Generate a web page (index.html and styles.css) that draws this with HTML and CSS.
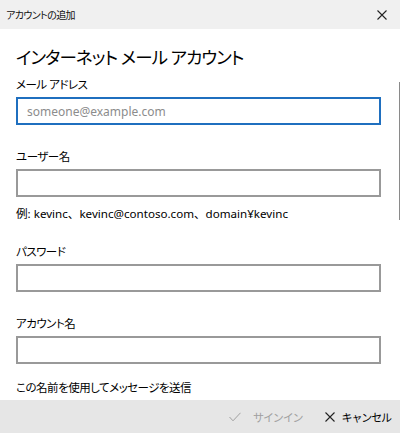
FILE: index.html
```html
<!DOCTYPE html>
<html lang="ja">
<head>
    <meta charset="utf-8">
    <title>アカウントの追加</title>
    <link rel="stylesheet" href="styles.css">
</head>
<body>
    <div class="dialog">
        <div class="titlebar">
            <span class="title">アカウントの追加</span>
            <button class="close" aria-label="閉じる">
                <svg width="10" height="10" viewBox="0 0 10 10"><path d="M0.5 0.5 L9.5 9.5 M9.5 0.5 L0.5 9.5" stroke="#222" stroke-width="1.1" fill="none"/></svg>
            </button>
        </div>

        <div class="content">
            <h1 class="heading">インターネット メール アカウント</h1>

            <label class="label">メール アドレス</label>
            <input class="field focused" type="text" placeholder="someone@example.com">

            <label class="label gap">ユーザー名</label>
            <input class="field" type="text">
            <p class="hint">例: kevinc、kevinc@contoso.com、domain¥kevinc</p>

            <label class="label gap-hint">パスワード</label>
            <input class="field" type="password">

            <label class="label gap">アカウント名</label>
            <input class="field" type="text">

            <label class="label gap-small">この名前を使用してメッセージを送信</label>
            <input class="field" type="text">

            <!-- scroll indicator -->
            <div class="scrollbar"></div>
        </div>

        <div class="footer">
            <button class="action disabled">
                <svg width="12" height="10" viewBox="0 0 12 10"><path d="M0.5 5 L4 8.8 L11.5 0.8" stroke="#a0a0a0" stroke-width="1" fill="none"/></svg>
                <span>サインイン</span>
            </button>
            <button class="action cancel">
                <svg width="10" height="10" viewBox="0 0 10 10"><path d="M0.5 0.5 L9.5 9.5 M9.5 0.5 L0.5 9.5" stroke="#222" stroke-width="1.1" fill="none"/></svg>
                <span>キャンセル</span>
            </button>
        </div>
    </div>
</body>
</html>
```

FILE: styles.css
```css
body {
    margin: 0;
    font-family: "Noto Sans", "Noto Sans CJK JP", sans-serif;
    font-feature-settings: "palt";
    color: #000;
    background: #fff;
}
.dialog {
    width: 400px;
    height: 433px;
    display: flex;
    flex-direction: column;
    overflow: hidden;
}
.titlebar {
    height: 29px;
    flex: none;
    display: flex;
    align-items: center;
    justify-content: space-between;
    padding: 0 13px 0 6px;
    background: #f0f0f0;
}
.title {
    font-size: 10px;
    letter-spacing: -0.6px;
    color: #111;
}
.close {
    border: none;
    background: none;
    padding: 0;
    display: flex;
}
.content {
    position: relative;
    flex: 1;
    overflow: hidden;
    display: flex;
    flex-direction: column;
    align-items: flex-start;
    padding: 0 19px 0 16px;
}
.heading {
    margin: 14px 0 4px;
    font-size: 17.5px;
    font-weight: normal;
    line-height: 28px;
    letter-spacing: -0.9px;
}
.label {
    font-size: 11.5px;
    line-height: 20px;
    letter-spacing: -0.5px;
    margin-bottom: 2px;
}
.label.gap { margin-top: 22px; }
.label.gap-hint { margin-top: 18px; }
.label.gap-small { margin-top: 14px; }
.field {
    box-sizing: border-box;
    width: 365px;
    height: 28px;
    flex: none;
    margin: 0;
    border: 2px solid #999;
    padding: 0 9px;
    font-family: inherit;
    font-size: 12px;
    outline: none;
    background: #fff;
}
.field.focused {
    border-color: #1f6fbf;
}
.field::placeholder {
    color: #8c8c8c;
}
.hint {
    margin: 7px 0 0;
    font-size: 11.6px;
    line-height: 20px;
    font-feature-settings: normal;
}
.scrollbar {
    position: absolute;
    right: 0;
    top: 53px;
    width: 1px;
    height: 138px;
    background: #8a8a8a;
}
.footer {
    height: 33px;
    flex: none;
    display: flex;
    align-items: center;
    justify-content: flex-end;
    gap: 22px;
    padding-right: 9px;
    background: #e6e6e6;
}
.action {
    display: flex;
    align-items: center;
    gap: 12px;
    border: none;
    background: none;
    padding: 0;
    font-family: inherit;
    font-size: 11px;
    letter-spacing: -1.1px;
    color: #000;
}
.action.cancel {
    gap: 7px;
}
.action.disabled {
    color: #a0a0a0;
}
```
